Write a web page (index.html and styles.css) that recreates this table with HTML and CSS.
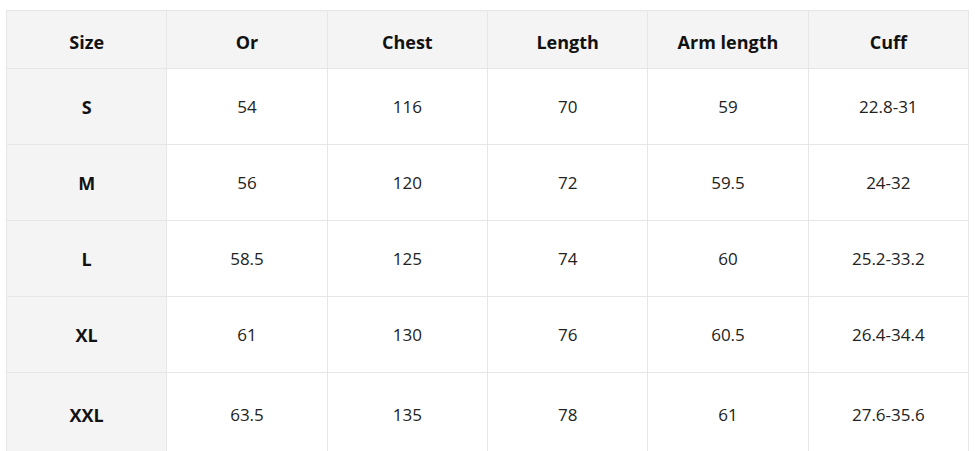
FILE: index.html
```html
<!DOCTYPE html>
<html>
<head>
<meta charset="utf-8">
<link rel="stylesheet" href="styles.css">
</head>
<body>
<table class="size-table">
  <thead>
    <tr><th>Size</th><th>Or</th><th>Chest</th><th>Length</th><th>Arm length</th><th>Cuff</th></tr>
  </thead>
  <tbody>
    <tr><th>S</th><td>54</td><td>116</td><td>70</td><td>59</td><td>22.8-31</td></tr>
    <tr><th>M</th><td>56</td><td>120</td><td>72</td><td>59.5</td><td>24-32</td></tr>
    <tr><th>L</th><td>58.5</td><td>125</td><td>74</td><td>60</td><td>25.2-33.2</td></tr>
    <tr><th>XL</th><td>61</td><td>130</td><td>76</td><td>60.5</td><td>26.4-34.4</td></tr>
    <tr class="last-row"><th>XXL</th><td>63.5</td><td>135</td><td>78</td><td>61</td><td>27.6-35.6</td></tr>
  </tbody>
</table>
</body>
</html>
```
FILE: styles.css
```css
html, body {
  margin: 0;
  padding: 0;
  background: #ffffff;
}
body {
  padding: 10px 6px 0 6px;
  font-family: "Open Sans", "Noto Sans", sans-serif;
  overflow: hidden;
}
.size-table {
  width: 963px;
  border-collapse: collapse;
  table-layout: fixed;
  font-size: 17px;
  color: #222;
}
.size-table th,
.size-table td {
  border: 1px solid #e6e6e6;
  text-align: center;
  vertical-align: middle;
  padding: 0;
}
.size-table thead th {
  height: 53px;
  padding-top: 4px;
  background: #f4f4f4;
  font-weight: 700;
  font-size: 18px;
  color: #111;
}
.size-table tbody tr {
  height: 76px;
}
.size-table tbody tr.last-row {
  height: 84px;
}
.size-table tbody th {
  background: #f4f4f4;
  font-weight: 700;
  font-size: 18px;
  color: #111;
}
.size-table td {
  background: #fff;
  font-weight: 400;
}
```
